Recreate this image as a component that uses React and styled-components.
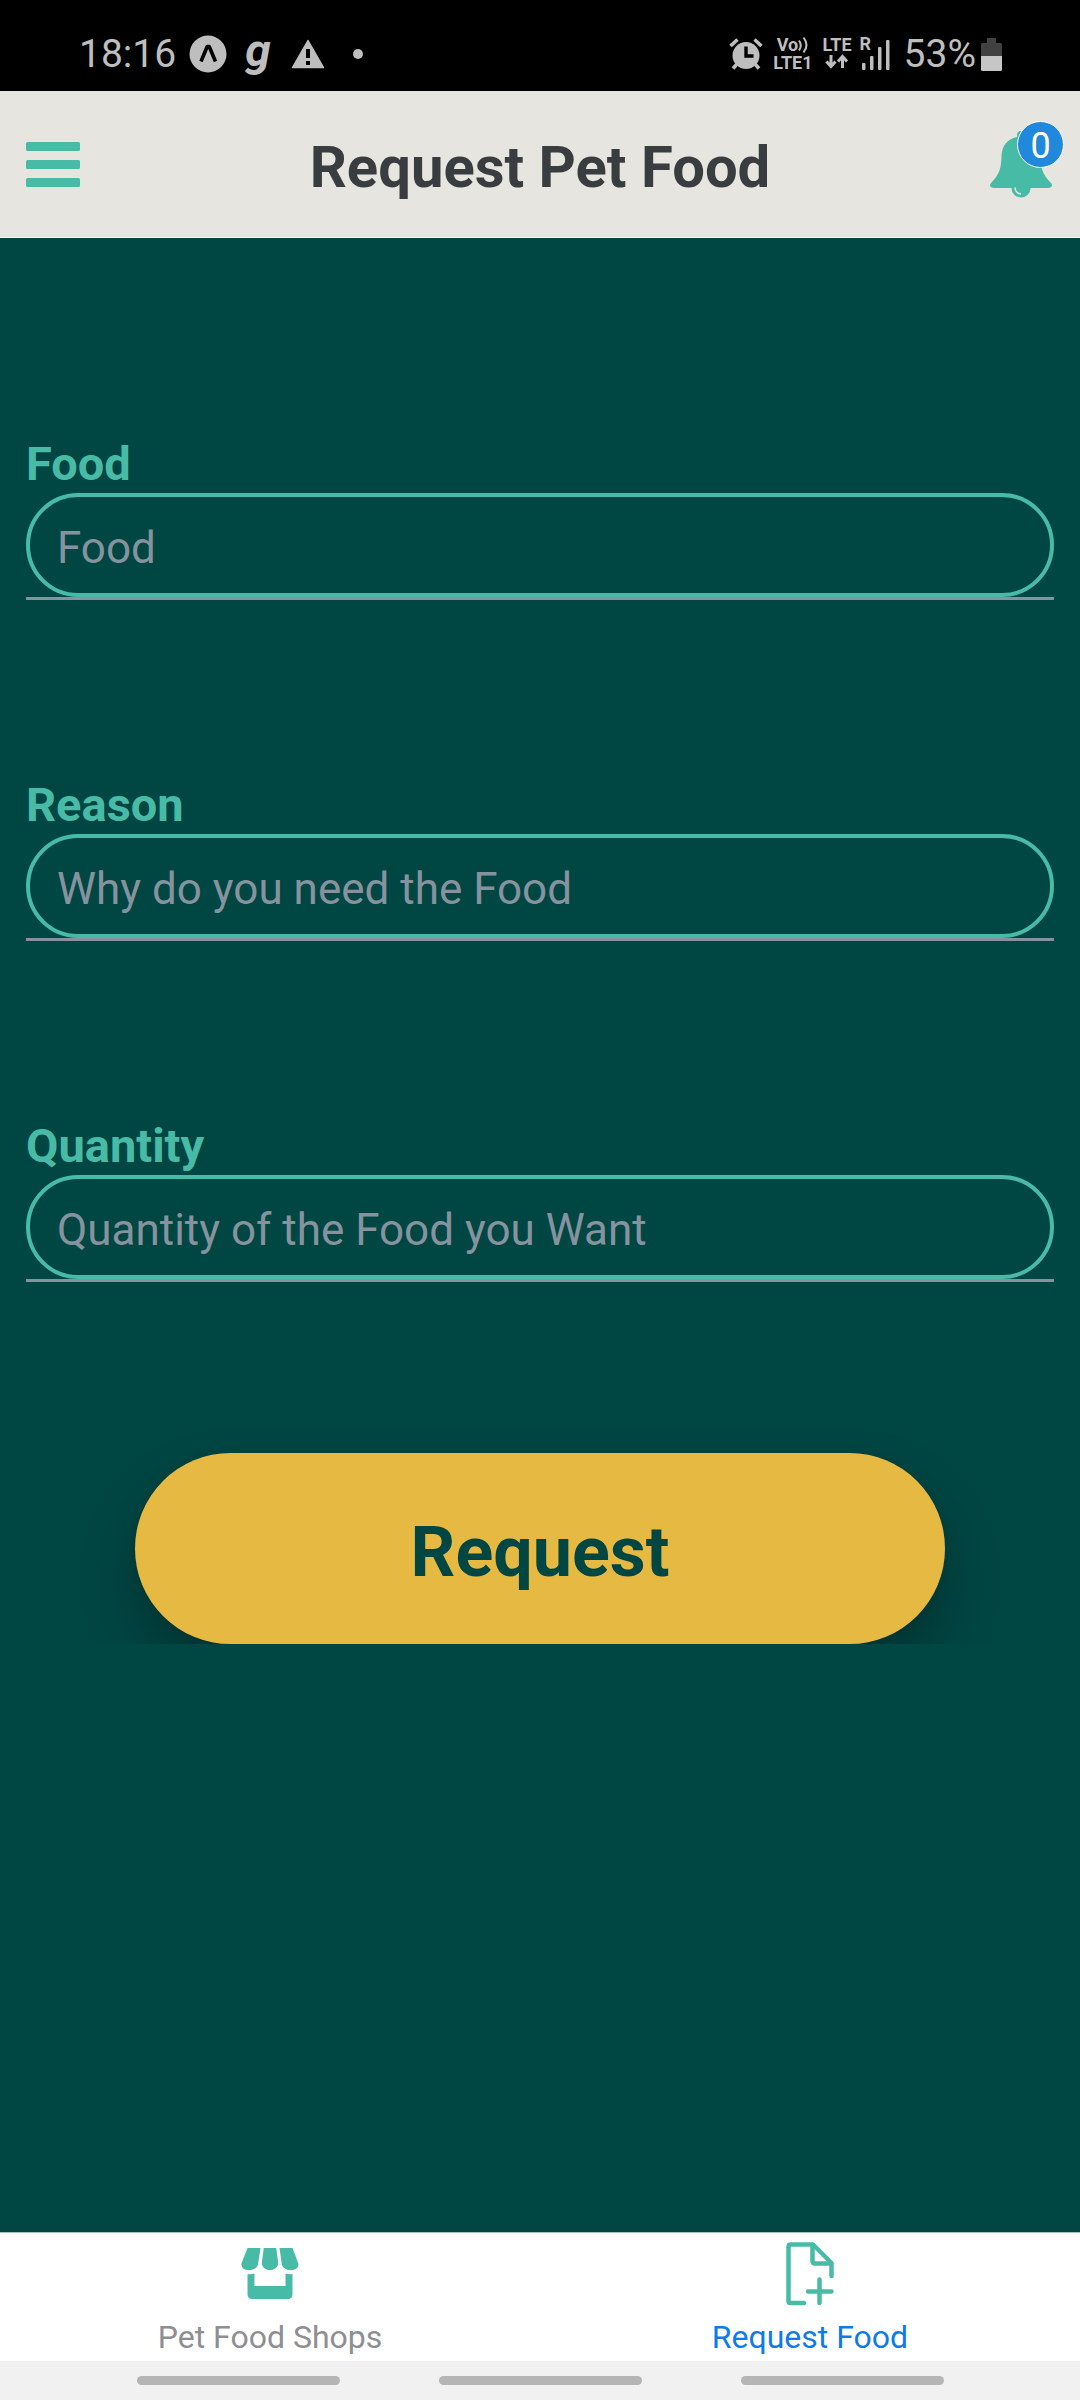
import React from "react";
import styled, { createGlobalStyle } from "styled-components";

const color = {
  teal: "#48bba7",
  deep: "#004643",
  paper: "#e6e5e0",
  ink: "#393d40",
  yellow: "#e6b942",
  grey: "#86939e",
  status: "#bebebe",
};

const GlobalStyle = createGlobalStyle`
  *, *::before, *::after { box-sizing: border-box; }
  body { margin: 0; background: ${color.deep}; font-family: Roboto, "Liberation Sans", sans-serif; }
  button, input { font-family: inherit; }
  svg { display: block; flex: none; }
`;

const Screen = styled.div`
  min-height: 100vh;
  display: flex;
  flex-direction: column;
`;

const StatusBar = styled.div`
  height: 91px;
  padding: 17px 78px 0 79px;
  display: flex;
  align-items: center;
  justify-content: space-between;
  background: #000;
  color: ${color.status};
  font-size: 39px;
  line-height: 48px;
`;

const StatusGroup = styled.div`
  display: flex;
  align-items: center;
  gap: ${(p) => p.$gap}px;
`;

const BrandMark = styled.span`
  width: 28px;
  padding-bottom: 8px;
  font-size: 46px;
  font-weight: 700;
  font-style: italic;
  line-height: 48px;
`;

const Network = styled.div`
  display: flex;
  flex-direction: column;
  align-items: center;
  height: 36px;
  font-size: 18px;
  font-weight: 700;
  line-height: 18px;
`;

const NetworkLine = styled.span`
  display: flex;
  align-items: center;
`;

const Signal = styled.div`
  position: relative;
`;

const Roaming = styled.span`
  position: absolute;
  top: -4px;
  left: -2px;
  font-size: 18px;
  font-weight: 700;
  line-height: 18px;
`;

const Percent = styled.span`
  padding-left: 4px;
`;

const Header = styled.header`
  height: 147px;
  padding: 0 26px;
  display: grid;
  grid-template-columns: 64px 1fr 64px;
  align-items: center;
  background: ${color.paper};
  border-bottom: 1px solid #f3f3f0;
`;

const Title = styled.h1`
  margin: 0;
  padding-top: 6px;
  color: ${color.ink};
  font-size: 58px;
  font-weight: 700;
  line-height: 68px;
  text-align: center;
  white-space: nowrap;
`;

const IconButton = styled.button`
  position: relative;
  display: flex;
  padding: 0;
  border: 0;
  background: none;
  color: ${color.teal};
  cursor: pointer;
`;

const Badge = styled.span`
  position: absolute;
  top: -10px;
  right: -10px;
  width: 47px;
  height: 47px;
  border: 1px solid #fff;
  border-radius: 50%;
  background: #2089dc;
  color: #fff;
  font-size: 36px;
  line-height: 48px;
  text-align: center;
`;

const Form = styled.form`
  flex: 1;
  display: flex;
  flex-direction: column;
  padding-top: 199px;
  background: ${color.deep};
`;

const Fields = styled.div`
  display: flex;
  flex-direction: column;
  gap: 178px;
  padding: 0 26px;
`;

const Field = styled.div`
  display: flex;
  flex-direction: column;
  border-bottom: 3px solid ${color.grey};
`;

const Label = styled.label`
  padding-bottom: 2px;
  color: ${color.teal};
  font-size: 47px;
  font-weight: 700;
  line-height: 54px;
`;

const Input = styled.input`
  width: 100%;
  height: 104px;
  padding: 6px 27px 0;
  border: 4px solid ${color.teal};
  border-radius: 52px;
  outline: 0;
  background: transparent;
  color: #fff;
  font-size: 44px;
  &::placeholder { color: ${color.grey}; opacity: 1; }
`;

const Actions = styled.div`
  display: flex;
  justify-content: center;
  margin-top: 131px;
  padding-top: 40px;
  overflow: hidden;
`;

const SubmitButton = styled.button`
  width: 75%;
  height: 191px;
  padding: 6px 0 0;
  border: 0;
  border-radius: 96px;
  background: ${color.yellow};
  box-shadow: 0 32px 56px rgba(0, 0, 0, 0.26), 0 0 8px rgba(0, 0, 0, 0.1);
  color: ${color.deep};
  font-size: 70px;
  font-weight: 700;
  cursor: pointer;
`;

const TabBar = styled.nav`
  display: flex;
  background: #fff;
  border-top: 1px solid #a5bfbe;
`;

const Tab = styled.a`
  flex: 1;
  display: flex;
  flex-direction: column;
  align-items: center;
  gap: 11px;
  padding: 8px 0 5px;
  color: ${(p) => (p.$active ? "#0f7bea" : "#8e8e93")};
  font-size: 32px;
  line-height: 38px;
  text-decoration: none;
`;

const TabIcon = styled.span`
  height: 66px;
  display: flex;
  align-items: center;
  color: ${color.teal};
`;

const GestureBar = styled.div`
  height: 39px;
  display: flex;
  align-items: center;
  justify-content: center;
  gap: 99px;
  background: #f1f1f1;
`;

const Pill = styled.span`
  width: 203px;
  height: 9px;
  border-radius: 5px;
  background: #b5b5b5;
`;

const ExpoIcon = () => (
  <svg width="38" height="38" viewBox="0 0 38 38">
    <circle cx="19" cy="19" r="18.5" fill="currentColor" />
    <path d="M12 26.5 L18.2 11.5 H20.2 L26.5 26.5" fill="none" stroke="#000" strokeWidth="3.6" strokeLinejoin="round" />
  </svg>
);

const WarningIcon = () => (
  <svg width="34" height="30" viewBox="0 0 34 30">
    <path d="M17 1.5 L32.5 28.5 H1.5 Z" fill="currentColor" stroke="currentColor" strokeWidth="1.5" strokeLinejoin="round" />
    <path d="M15 10h4v9h-4zM15 22h4v4h-4z" fill="#000" />
  </svg>
);

const DotIcon = () => (
  <svg width="20" height="10" viewBox="0 0 20 10">
    <circle cx="15" cy="5" r="5" fill="currentColor" />
  </svg>
);

const AlarmIcon = () => (
  <svg width="34" height="32" viewBox="0 0 34 32" stroke="currentColor" strokeWidth="3.6">
    <path d="M1.5 8 L8.5 1.5 M25.5 1.5 L32.5 8 M8 26 L4 30.5 M26 26 L30 30.5" />
    <circle cx="17" cy="17.5" r="13.5" fill="currentColor" stroke="none" />
    <path d="M17 8.5 V18 H24.5" fill="none" stroke="#000" strokeWidth="3.4" />
  </svg>
);

const WavesIcon = () => (
  <svg width="11" height="18" viewBox="0 0 11 18" fill="none" stroke="currentColor" strokeWidth="2">
    <path d="M1 4.5 Q4.5 9.5 1 14.5 M5.5 1.5 Q11.5 9 5.5 16.5" />
  </svg>
);

const DataArrowsIcon = () => (
  <svg width="24" height="15" viewBox="0 0 24 15" fill="none" stroke="currentColor" strokeWidth="3">
    <path d="M6 1 V12 M1.5 7.5 L6 12.5 L10.5 7.5 M17.5 14 V3 M13 7.5 L17.5 2.5 L22 7.5" />
  </svg>
);

const SignalIcon = () => (
  <svg width="28" height="31" viewBox="0 0 28 31" fill="currentColor">
    <rect x="0" y="24" width="3.5" height="7" rx="1" />
    <rect x="8" y="17" width="3.5" height="14" rx="1" />
    <rect x="16" y="8" width="3.5" height="23" rx="1" />
    <rect x="24" y="1" width="3.5" height="30" rx="1" />
  </svg>
);

const BatteryIcon = () => (
  <svg width="21" height="33" viewBox="0 0 21 33">
    <path d="M6 0h9v5h4.500q1.500 0 1.500 1.500V18H0V6.500q0-1.500 1.500-1.500H6z" fill="#414141" />
    <path d="M0 18h21v13.500q0 1.500-1.500 1.500H1.500Q0 33 0 31.500z" fill="#c6c6c6" />
  </svg>
);

const MenuIcon = () => (
  <svg width="54" height="45" viewBox="0 0 54 45" fill="currentColor">
    <rect y="0" width="54" height="9" rx="1.5" />
    <rect y="18" width="54" height="9" rx="1.5" />
    <rect y="36" width="54" height="9" rx="1.5" />
  </svg>
);

const BellIcon = () => (
  <svg width="62" height="67" viewBox="0 0 62 67" fill="currentColor">
    <path d="M27 4 Q27 0 31 0 Q35 0 35 4 V6 C45 8 50 15 50.500 25 C50.800 36 52 43 60.500 51.500 C63.500 54.500 61.500 57 58 57 H4 C0.500 57 -1.500 54.500 1.500 51.500 C10 43 11.200 36 11.500 25 C12 15 17 8 27 6 Z" />
    <path d="M21.500 57 H40.500 A9.500 9.500 0 0 1 21.500 57 Z" />
    <path d="M25 56.500 A6.500 6.500 0 0 0 31 63" fill="none" stroke={color.paper} strokeWidth="1.6" />
  </svg>
);

const ShopIcon = () => (
  <svg width="58" height="52" viewBox="0 1 58 52" fill="currentColor">
    <path d="M6.500 1 H19.500 L17.200 16.500 C16.500 25.500 -1.500 25.500 0.600 16 Z" />
    <path d="M22.800 1 H35.200 L37.200 15.500 C37.500 25.500 20.500 25.500 20.800 15.500 Z" />
    <path d="M38.500 1 H51.500 L57.200 16 C59.500 25.500 41.500 25.500 40.700 16.500 Z" />
    <path d="M6.500 27 Q10 27.500 13.500 26.500 V39 H44.500 V26.500 Q48 27.500 51.500 27 V47 Q51.500 52 46.500 52 H11.500 Q6.500 52 6.500 47 Z" />
  </svg>
);

const AddFileIcon = () => (
  <svg width="48" height="64" viewBox="0 0 48 64" fill="none" stroke="currentColor" strokeWidth="4.5" strokeLinecap="round" strokeLinejoin="round">
    <path d="M18 61 H4.500 Q2.500 61 2.500 59 V4.500 Q2.500 2.500 4.500 2.500 H27 L45.500 21 V34" />
    <path d="M26.500 3 V19 Q26.500 21.500 29 21.500 H45" />
    <path d="M33.500 37.500 V61 M22 49.500 H45.500" />
  </svg>
);

const fields = [
  { id: "food", label: "Food", placeholder: "Food" },
  { id: "reason", label: "Reason", placeholder: "Why do you need the Food" },
  { id: "quantity", label: "Quantity", placeholder: "Quantity of the Food you Want" },
];

export default function App() {
  return (
    <Screen>
      <GlobalStyle />
      <StatusBar>
        <StatusGroup $gap={18}>
          <StatusGroup $gap={13}>
            <span>18:16</span>
            <ExpoIcon />
          </StatusGroup>
          <BrandMark>g</BrandMark>
          <WarningIcon />
          <DotIcon />
        </StatusGroup>
        <StatusGroup $gap={10}>
          <AlarmIcon />
          <Network>
            <NetworkLine>Vo<WavesIcon /></NetworkLine>
            <NetworkLine>LTE1</NetworkLine>
          </Network>
          <Network>
            <NetworkLine>LTE</NetworkLine>
            <DataArrowsIcon />
          </Network>
          <Signal>
            <SignalIcon />
            <Roaming>R</Roaming>
          </Signal>
          <StatusGroup $gap={5}>
            <Percent>53%</Percent>
            <BatteryIcon />
          </StatusGroup>
        </StatusGroup>
      </StatusBar>

      <Header>
        <IconButton type="button" aria-label="Menu">
          <MenuIcon />
        </IconButton>
        <Title>Request Pet Food</Title>
        <IconButton type="button" aria-label="Notifications">
          <BellIcon />
          <Badge>0</Badge>
        </IconButton>
      </Header>

      <Form onSubmit={(e) => e.preventDefault()}>
        <Fields>
          {fields.map((f) => (
            <Field key={f.id}>
              <Label htmlFor={f.id}>{f.label}</Label>
              <Input id={f.id} type="text" placeholder={f.placeholder} />
            </Field>
          ))}
        </Fields>
        <Actions>
          <SubmitButton type="submit">Request</SubmitButton>
        </Actions>
      </Form>

      <TabBar>
        <Tab href="#shops">
          <TabIcon><ShopIcon /></TabIcon>
          Pet Food Shops
        </Tab>
        <Tab href="#request" $active aria-current="page">
          <TabIcon><AddFileIcon /></TabIcon>
          Request Food
        </Tab>
      </TabBar>
      <GestureBar>
        <Pill />
        <Pill />
        <Pill />
      </GestureBar>
    </Screen>
  );
}
